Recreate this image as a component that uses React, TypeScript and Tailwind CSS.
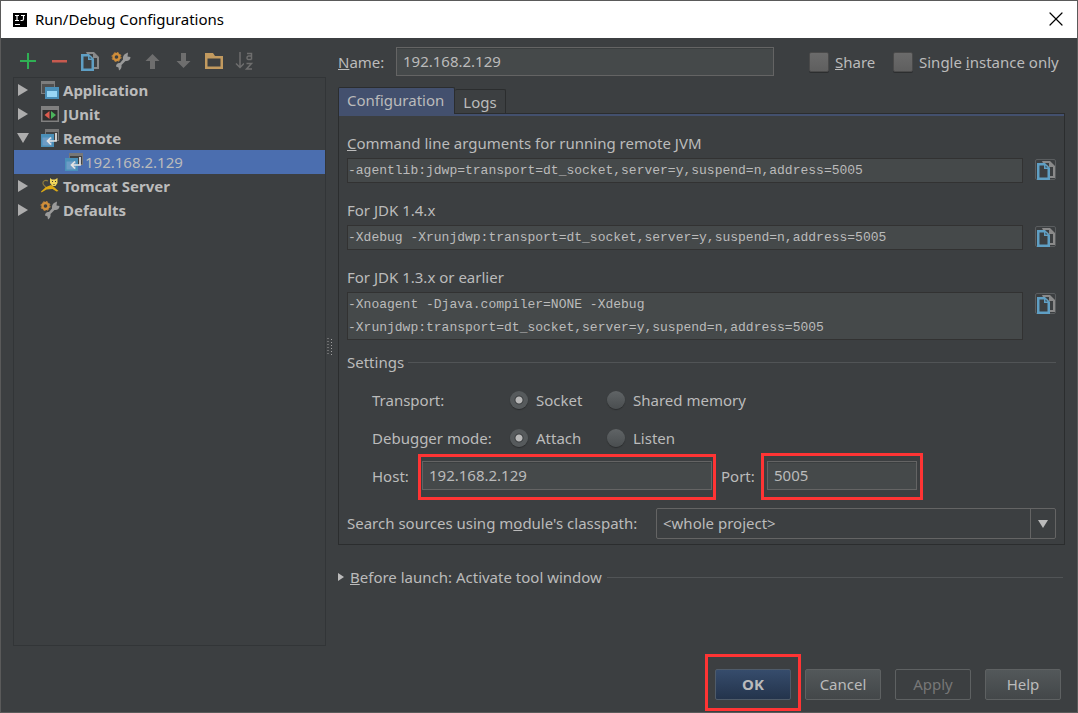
import { useState, type ReactNode } from "react";
import { X } from "lucide-react";

type IconName =
  | "application"
  | "junit"
  | "remote"
  | "tomcat"
  | "defaults";

type TreeNode = {
  label: string;
  icon: IconName;
  open?: boolean;
  children?: string[];
};

const nodes: TreeNode[] = [
  { label: "Application", icon: "application" },
  { label: "JUnit", icon: "junit" },
  { label: "Remote", icon: "remote", open: true, children: ["192.168.2.129"] },
  { label: "Tomcat Server", icon: "tomcat" },
  { label: "Defaults", icon: "defaults" },
];

function CopyIcon() {
  return (
    <svg viewBox="0 0 20 20" className="size-5" fill="none">
      <path d="M6 1h8l5 5v12h-5" fill="#8a8a8a" />
      <path d="M8 3h5v4h4v9h-3V8l-3-3H8z" fill="#3c3f41" />
      <path d="M1 3h8l5 5v12H1z" fill="#5f9fc4" />
      <path d="M3.5 5.5H8V9h3.500v8.500h-8z" fill="#3c3f41" />
      <path d="M9.500 5.500v2h2z" fill="#3c3f41" />
    </svg>
  );
}

function WrenchIcon() {
  return (
    <svg viewBox="0 0 20 20" className="size-5" fill="none">
      <path
        d="M14 3l3-1.500-.500 4L19.500 6c0 3-2.500 4.500-5 4l-4 4c.4 2.500-.5 4.500-2.500 5.500L7.500 16.500 5 15.500c0-2.500 2-4 4-3.500l3-3.500C11.500 6 12.500 4 14 3z"
        fill="#9a9a9a"
      />
      <circle cx="5.500" cy="6" r="3" stroke="#d08e3a" strokeWidth="2.400" />
      <circle
        cx="5.500"
        cy="6"
        r="4.500"
        stroke="#d08e3a"
        strokeWidth="1"
        strokeDasharray="1.800 1.740"
      />
    </svg>
  );
}

function ArrowIcon({ down }: { down?: boolean }) {
  return (
    <svg viewBox="0 0 20 20" className="size-5">
      {down ? (
        <path d="M8 2h5v8h4.500l-7 7-7-7H8z" fill="#6e6e6e" />
      ) : (
        <path d="M8 18h5v-8h4.500l-7-7-7 7H8z" fill="#6e6e6e" />
      )}
    </svg>
  );
}

function SortIcon() {
  return (
    <span className="flex size-5 items-center">
      <svg viewBox="0 0 9 20" className="h-5 w-[9px]" fill="none">
        <path d="M5 1v16M1 12.500l4 4 4-4" stroke="#6e6e6e" strokeWidth="1.500" />
      </svg>
      <svg viewBox="0 0 11 20" className="h-5 w-[11px]" fill="none">
        <path
          d="M3 2.500h4.500v6M7.500 5H4.500Q3 5 3 6.800T4.500 8.500h3M2.500 12.500h5l-5 5.500h5.500"
          stroke="#6e6e6e"
          strokeWidth="1.500"
        />
      </svg>
    </span>
  );
}

function NodeIcon({ name }: { name: IconName }) {
  if (name === "defaults") return <WrenchIcon />;
  return (
    <svg viewBox="0 0 20 20" className="size-5" fill="none">
      {name === "application" && (
        <>
          <path d="M1 1h14v13H1z" fill="#7d7d7d" />
          <path d="M2 4h12v9H2z" fill="#505050" />
          <path d="M5 7h14v12H5z" fill="#4a8fb8" />
          <path d="M7 11h10v6H7z" fill="#98d6f5" />
        </>
      )}
      {name === "junit" && (
        <>
          <path d="M1 2h18v16H1z" fill="#808080" />
          <path d="M2.500 6h15v10.500h-15z" fill="#2f2f2f" />
          <path d="M9.500 7v8L4.500 11z" fill="#dc5b4e" />
          <path d="M11 7v8l5-4z" fill="#4bb35c" />
        </>
      )}
      {name === "remote" && (
        <>
          <path d="M5 1h14v12H5z" fill="#777" />
          <path d="M6 4h12v8H6z" fill="#414345" />
          <path d="M1 6h13v13H1z" fill="#4a8fb8" />
          <path d="M2.500 9.500H12v8H2.500z" fill="#6c9cc6" />
          <path
            d="M16 5v8H8M11 9.500L7.500 13l3.500 3.500"
            stroke="#e4e4e4"
            strokeWidth="1.700"
          />
        </>
      )}
      {name === "tomcat" && (
        <>
          <path
            d="M8 5C5.500 3.500 2.500 5 3 7.500s2.500 2 3 4.500"
            stroke="#8f7c3c"
            strokeWidth="1.200"
          />
          <path d="M1 15.500l5-4.500 5-2 3 2 4.500 4-2 .5-4-2.500-6 .5-5 3z" fill="#dba915" />
          <path d="M10 2l2 1.500h3L17.500 2v5l-2 3h-3L10 7z" fill="#efd45a" />
          <path d="M12 5h1v1h-1zM15 5h1v1h-1zM13.500 8h1v1h-1z" fill="#333" />
        </>
      )}
    </svg>
  );
}

function ToolButton({ label, children }: { label: string; children: ReactNode }) {
  return (
    <button type="button" aria-label={label} className="size-5">
      {children}
    </button>
  );
}

function Toolbar() {
  return (
    <div className="mb-0.5 flex h-7 items-center gap-[11px] pl-[5px]">
      <ToolButton label="Add">
        <svg viewBox="0 0 20 20" className="size-5">
          <path d="M9 2h2v7h7v2h-7v7H9v-7H2V9h7z" fill="#2fb054" />
        </svg>
      </ToolButton>
      <ToolButton label="Remove">
        <svg viewBox="0 0 20 20" className="size-5">
          <path d="M3 9h15v2.500H3z" fill="#c75a4f" />
        </svg>
      </ToolButton>
      <ToolButton label="Copy">
        <CopyIcon />
      </ToolButton>
      <ToolButton label="Edit defaults">
        <WrenchIcon />
      </ToolButton>
      <ToolButton label="Move up">
        <ArrowIcon />
      </ToolButton>
      <ToolButton label="Move down">
        <ArrowIcon down />
      </ToolButton>
      <ToolButton label="Create folder">
        <svg viewBox="0 0 20 20" className="size-5" fill="none">
          <path d="M1 2h8l2 3h8v13H1z" fill="#c29a5f" />
          <path d="M3.500 7.500h13v8h-13z" fill="#3c3f41" />
        </svg>
      </ToolButton>
      <ToolButton label="Sort">
        <SortIcon />
      </ToolButton>
    </div>
  );
}

function ConfigTree() {
  return (
    <ul className="flex-1 border border-[#323537]">
      {nodes.map((node) => (
        <li key={node.label}>
          <div className="flex h-6 items-center">
            <svg viewBox="0 0 12 12" className="ml-[3px] size-3" fill="#adadad">
              {node.open ? <path d="M0 1h12L6 11z" /> : <path d="M1 0v12l10-6z" />}
            </svg>
            <span className="ml-[11px]">
              <NodeIcon name={node.icon} />
            </span>
            <span className="ml-[3px] font-bold">{node.label}</span>
          </div>
          {node.children?.map((child) => (
            <div key={child} className="flex h-6 items-center bg-[#4b6eaf] pl-[50px]">
              <NodeIcon name="remote" />
              <span className="ml-px">{child}</span>
            </div>
          ))}
        </li>
      ))}
    </ul>
  );
}

const fieldClass =
  "h-[29px] min-w-0 border border-[#646464] bg-[#45494a] px-1.5 pb-0.5 shadow-[inset_0_1px_0_#3b3f40] outline-none";
const codeClass =
  "block min-w-0 flex-1 resize-none border border-[#323232] bg-[#45494a] font-['Liberation_Mono',monospace] text-[13px] leading-[23px] outline-none";

type CommandProps = {
  id: string;
  label: ReactNode;
  value: string;
  rows?: number;
};

function Command({ id, label, value, rows = 1 }: CommandProps) {
  return (
    <div className="mb-[15px]">
      <label htmlFor={id} className="mb-[3px] block">
        {label}
      </label>
      <div className="flex items-start gap-3">
        {rows > 1 ? (
          <textarea id={id} readOnly rows={rows} value={value} className={codeClass} />
        ) : (
          <input id={id} readOnly value={value} className={`${codeClass} h-[25px]`} />
        )}
        <button
          type="button"
          aria-label="Copy to clipboard"
          className="mt-px size-[21px] rounded-xs border border-[#5a5d5f]"
        >
          <CopyIcon />
        </button>
      </div>
    </div>
  );
}

type RadioProps = {
  name: string;
  label: string;
  checked?: boolean;
};

function Radio({ name, label, checked }: RadioProps) {
  return (
    <label className="flex min-w-[97px] items-center gap-2 whitespace-nowrap">
      <input
        type="radio"
        name={name}
        defaultChecked={checked}
        className="size-[18px] appearance-none rounded-full bg-linear-to-b from-[#606466] to-[#4a4e50] shadow-[0_1px_1px_#2a2c2d] checked:bg-[radial-gradient(circle,#b8b8b8_0_3px,#3a3d3f_4px,#565a5c_5px)]"
      />
      {label}
    </label>
  );
}

function Check({ children }: { children: ReactNode }) {
  return (
    <label className="flex items-center gap-1.5 whitespace-nowrap">
      <input
        type="checkbox"
        className="size-5 appearance-none rounded-xs border border-[#4a4a4a] bg-linear-to-b from-[#6b6b6b] to-[#5f5f5f] shadow-[0_1px_0_#2c2e2f]"
      />
      <span>{children}</span>
    </label>
  );
}

function Highlight({ className }: { className: string }) {
  return (
    <span
      className={`pointer-events-none absolute border-3 border-[#ff3434] ${className}`}
    />
  );
}

function RemotePanel() {
  return (
    <div className="border border-[#2b2d2e]">
      <div className="h-0.5 bg-[#43506e]" />
      <div className="px-2 pt-[15px] pb-[5px]">
        <Command
          id="args"
          label={
            <>
              <u>C</u>ommand line arguments for running remote JVM
            </>
          }
          value="-agentlib:jdwp=transport=dt_socket,server=y,suspend=n,address=5005"
        />
        <Command
          id="jdk14"
          label="For JDK 1.4.x"
          value="-Xdebug -Xrunjdwp:transport=dt_socket,server=y,suspend=n,address=5005"
        />
        <Command
          id="jdk13"
          label="For JDK 1.3.x or earlier"
          rows={2}
          value={
            "-Xnoagent -Djava.compiler=NONE -Xdebug\n-Xrunjdwp:transport=dt_socket,server=y,suspend=n,address=5005"
          }
        />

        <fieldset className="-mt-[5px]">
          <div className="flex items-center gap-1">
            <span>Settings</span>
            <span className="h-px flex-1 bg-[#515456]" />
          </div>
          <div className="pl-[25px]">
            <div className="mt-3.5 flex">
              <span className="w-[138px]">Transport:</span>
              <Radio name="transport" label="Socket" checked />
              <Radio name="transport" label="Shared memory" />
            </div>
            <div className="mt-3.5 flex">
              <span className="w-[138px] whitespace-nowrap">Debugger mode:</span>
              <Radio name="mode" label="Attach" checked />
              <Radio name="mode" label="Listen" />
            </div>
            <div className="mt-[11px] flex items-center">
              <label htmlFor="host" className="w-[50px]">
                Host:
              </label>
              <div className="relative">
                <input
                  id="host"
                  defaultValue="192.168.2.129"
                  className={`${fieldClass} block w-[290px]`}
                />
                <Highlight className="-inset-x-1 -top-[7px] -bottom-2.5" />
              </div>
              <label htmlFor="port" className="ml-[9px] w-[46px]">
                Port:
              </label>
              <div className="relative">
                <input
                  id="port"
                  defaultValue="5005"
                  className={`${fieldClass} block w-[150px]`}
                />
                <Highlight className="-inset-x-1.5 -top-2 -bottom-2.5" />
              </div>
            </div>
          </div>
        </fieldset>

        <div className="mt-[18px] flex items-center">
          <label htmlFor="module" className="w-[309px] pb-0.5 whitespace-nowrap">
            Search sources using m<u>o</u>dule's classpath:
          </label>
          <div className="relative flex-1">
            <select
              id="module"
              className="block h-[31px] w-full appearance-none rounded-xs border border-[#646464] bg-[#3c3f41] px-1.5 pb-0.5 outline-none"
            >
              <option>&lt;whole project&gt;</option>
            </select>
            <span className="pointer-events-none absolute inset-y-0 right-0 flex w-[26px] items-center justify-center border-l border-[#646464] pr-0.5">
              <svg viewBox="0 0 10 8" className="h-2 w-2.5" fill="#bbbbbb">
                <path d="M0 0h10L5 8z" />
              </svg>
            </span>
          </div>
        </div>
      </div>
    </div>
  );
}

const buttonClass =
  "h-[31px] w-[76px] rounded-xs border border-[#5e6162] bg-linear-to-b from-[#53585a] to-[#434749] pb-0.5";

export default function App() {
  const [tab, setTab] = useState("Configuration");

  return (
    <div className="flex min-h-screen flex-col border border-[#5a5a5a] bg-[#3c3f41] font-['Noto_Sans',sans-serif] text-[15px] leading-6 text-[#bbbbbb]">
      <header className="flex h-[37px] items-center bg-white pr-[9px] pl-3 text-black">
        <svg viewBox="0 0 14 14" className="size-3.5" fill="none">
          <path d="M0 0h14v14H0z" fill="#000" />
          <path
            d="M2 2.500h4M4 2.500v5M2 7.500h4M8 2.500h4M10.500 2.500V6q0 1.500-1.500 1.500H7.500M2 11.500h5"
            stroke="#fff"
            strokeWidth="1.200"
          />
        </svg>
        <h1 className="ml-2 pb-0.5">Run/Debug Configurations</h1>
        <button type="button" aria-label="Close" className="ml-auto pb-0.5">
          <X className="size-6" strokeWidth={1.2} />
        </button>
      </header>

      <main className="flex flex-1 px-3 pt-[9px]">
        <section className="flex w-[313px] shrink-0 flex-col">
          <Toolbar />
          <ConfigTree />
        </section>

        <div className="flex w-3 shrink-0 items-center pl-px">
          <svg viewBox="0 0 6 18" className="h-[18px] w-1.5">
            <path
              d="M1 0v18M4.500 1v17"
              stroke="#a0a0a0"
              strokeWidth="1"
              strokeDasharray="1 2"
            />
          </svg>
        </div>

        <section className="min-w-0 flex-1">
          <div className="flex items-center">
            <label htmlFor="name" className="w-[58px]">
              <u>N</u>ame:
            </label>
            <input
              id="name"
              defaultValue="192.168.2.129"
              className={`${fieldClass} flex-1`}
            />
            <div className="ml-[35px] w-[84px]">
              <Check>
                <u>S</u>hare
              </Check>
            </div>
            <div className="w-[172px]">
              <Check>
                Single <u>i</u>nstance only
              </Check>
            </div>
          </div>

          <div role="tablist" className="mt-[11px] flex items-end">
            {["Configuration", "Logs"].map((name) => (
              <button
                key={name}
                type="button"
                role="tab"
                aria-selected={tab === name}
                onClick={() => setTab(name)}
                className={
                  tab === name
                    ? "relative -mb-px h-[27px] rounded-t-xs border border-b-0 border-[#2b2d2e] bg-[#43506e] pr-2.5 pb-0.5 pl-2"
                    : "h-6 rounded-t-xs border border-b-0 border-l-0 border-[#2b2d2e] px-2"
                }
              >
                {name}
              </button>
            ))}
          </div>
          <RemotePanel />

          <div className="mt-5 flex items-center">
            <button type="button" className="flex items-center gap-1.5">
              <svg viewBox="0 0 6 8" className="h-2 w-1.5" fill="#bbbbbb">
                <path d="M0 0v8l6-4z" />
              </svg>
              <span>
                <u>B</u>efore launch: Activate tool window
              </span>
            </button>
            <span className="mr-0.5 ml-[5px] h-px flex-1 bg-[#515456]" />
          </div>
        </section>
      </main>

      <footer className="flex justify-end gap-3.5 pt-[23px] pr-4 pb-3">
        <div className="relative">
          <button
            type="button"
            className="block h-[31px] w-[76px] rounded-xs border border-[#4f5b69] bg-linear-to-b from-[#364c6c] to-[#24344c] pb-0.5 font-bold"
          >
            OK
          </button>
          <Highlight className="-inset-x-2.5 -top-[15px] -bottom-[11px]" />
        </div>
        <button type="button" className={buttonClass}>
          Cancel
        </button>
        <button
          type="button"
          disabled
          className="h-[31px] w-[76px] rounded-xs border border-[#5e6162] pb-0.5 text-[#777777]"
        >
          Apply
        </button>
        <button type="button" className={buttonClass}>
          Help
        </button>
      </footer>
    </div>
  );
}
